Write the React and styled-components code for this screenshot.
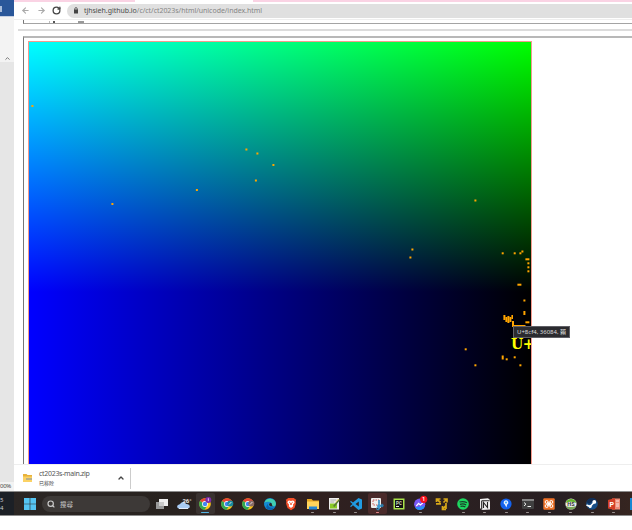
import React from "react";
import styled, { createGlobalStyle } from "styled-components";
import { ArrowLeft, ArrowRight, RotateCw, ChevronUp, Search } from "lucide-react";

const Global = createGlobalStyle`
  * { box-sizing: border-box; }
  html, body { margin: 0; background: #fff; overflow: hidden; }
  body { font-family: "Noto Sans", "Noto Sans CJK TC", sans-serif; }
  svg { display: block; flex: none; }
`;

const Screen = styled.div`
  width: 632px;
  height: 530px;
  display: flex;
  flex-direction: column;
  background: #fff;
  overflow: hidden;
`;
const Desktop = styled.div`
  height: 491px;
  display: flex;
  flex: none;
`;

/* Word window peeking out on the left */
const SideWindow = styled.div`
  width: 14px;
  flex: none;
  display: flex;
  flex-direction: column;
  background: #e6e6e6;
`;
const SideTitle = styled.div`
  height: 17px;
  background: #2a579a;
  padding-top: 6px;
  border-bottom: 1px solid #c6d0e2;
`;
const SideTitleMark = styled.div`
  width: 2px;
  height: 6px;
  background: #a9bddb;
`;
const SideRibbon = styled.div`
  height: 45px;
  background: #f3f3f3;
  display: flex;
  align-items: flex-end;
  padding: 0 0 0 4px;
  color: #666;
`;
const SideStatus = styled.div`
  height: 9px;
  margin-top: auto;
  background: #f3f3f3;
  font-size: 6px;
  line-height: 8px;
  letter-spacing: -0.3px;
  color: #444;
  white-space: nowrap;
`;

const Browser = styled.div`
  flex: 1;
  min-width: 0;
  display: flex;
  flex-direction: column;
`;
const TabStrip = styled.div`
  height: 2px;
  background: #fad3e4;
  padding-left: 121px;
`;
const ActiveTab = styled.div`
  width: 118px;
  height: 2px;
  background: #fff;
`;
const Toolbar = styled.div`
  height: 18px;
  display: flex;
  align-items: center;
  padding: 0 0 0 6px;
  color: #555;
  border-bottom: 1px solid #eee;
`;
const NavButton = styled.div`
  width: 10px;
  display: flex;
  justify-content: center;
  margin-right: ${(p) => p.$gap}px;
  color: ${(p) => (p.$muted ? "#aaa" : "#444")};
`;
const Omnibox = styled.div`
  flex: 1;
  height: 14px;
  background: #e0e0e0;
  border-radius: 7px 0 0 7px;
  display: flex;
  align-items: center;
  padding-left: 6px;
  gap: 5px;
`;
const Url = styled.span`
  font-size: 7px;
  line-height: 12px;
  letter-spacing: -0.04px;
  color: #858585;
  white-space: nowrap;
`;
const Host = styled.span`
  color: #4c4c4c;
`;

const Page = styled.div`
  height: 444px;
  overflow: hidden;
  display: flex;
  flex-direction: column;
`;
const UpperFrame = styled.div`
  height: 4px;
  flex: none;
  margin-left: 9px;
  border-left: 1px solid #777;
  border-bottom: 1px solid #a4a4a4;
  padding: 1px 0 0 25px;
  display: flex;
  gap: 3px;
`;
const TextTail = styled.div`
  width: ${(p) => p.$w}px;
  height: 2px;
  margin-left: ${(p) => p.$left}px;
  background: ${(p) => p.$c};
`;
const Rule = styled.div`
  height: 2px;
  flex: none;
  margin: 5px 0 5px 4px;
  background: #dcdcdc;
`;
const LowerFrame = styled.div`
  flex: 1;
  min-height: 0;
  margin-left: 9px;
  border-left: 1px solid #777;
  border-top: 2px solid #b8b8b8;
  padding: 3px 0 0 4px;
  display: flex;
`;
const Canvas = styled.div`
  position: relative;
  width: 504px;
  height: 504px;
  flex: none;
  border: 1px solid #f59a8d;
  background:
    linear-gradient(to right, #00f, #000),
    linear-gradient(to bottom, #0f0, #000 250px);
  background-blend-mode: screen;
`;
const Plot = styled.svg`
  position: absolute;
  left: 0;
  top: 0;
`;
const CodeLabel = styled.div`
  position: absolute;
  left: 482px;
  top: 294px;
  width: 20px;
  height: 17px;
  overflow: hidden;
  font: bold 14px/17px "DejaVu Serif", serif;
  letter-spacing: -0.5px;
  white-space: nowrap;
  color: #ff0;
`;
const Tooltip = styled.div`
  position: absolute;
  left: 484px;
  top: 284px;
  width: 57px;
  height: 12px;
  background: #2b2b2f;
  border: 1px solid #606066;
  color: #ddd;
  font-size: 6px;
  line-height: 10px;
  padding-left: 3px;
  letter-spacing: 0;
  white-space: nowrap;
`;

const DownloadBar = styled.div`
  height: 27px;
  border-top: 1px solid #eee;
  display: flex;
  align-items: center;
  padding-left: 9px;
  background: #fff;
`;
const DownloadItem = styled.div`
  width: 108px;
  height: 21px;
  border-right: 1px solid #ccc;
  display: flex;
  align-items: center;
  color: #444;
`;
const DownloadText = styled.div`
  width: 78px;
  margin-left: 7px;
  display: flex;
  flex-direction: column;
`;
const FileName = styled.span`
  font-size: 7px;
  line-height: 10px;
  letter-spacing: -0.3px;
  color: #555;
`;
const FileState = styled.span`
  font-size: 5px;
  line-height: 9px;
  color: #444;
`;

const Taskbar = styled.div`
  height: 25px;
  flex: none;
  display: flex;
  align-items: center;
  border-top: 1px solid #8c8c8c;
  border-bottom: 1px solid #8c8c8c;
  background: linear-gradient(to right, #1c2026 14px, #2b2624 14px, #28221f 170px, #30201f 290px, #2c2021 420px, #271f22 560px, #362520);
`;
const Clock = styled.div`
  width: 14px;
  font-size: 6px;
  line-height: 8px;
  color: #ccc;
  flex: none;
`;
const Start = styled.div`
  width: 28px;
  padding-left: 10px;
  flex: none;
`;
const SearchPill = styled.div`
  width: 108px;
  height: 16px;
  border-radius: 8px;
  background: #3d3937;
  display: flex;
  align-items: center;
  padding-left: 5px;
  gap: 5px;
  font-size: 6.5px;
  color: #ccc;
  flex: none;
`;
const Apps = styled.div`
  display: grid;
  grid-auto-flow: column;
  grid-auto-columns: 21.5px;
  height: 23px;
  margin-left: 1.5px;
`;
const AppButton = styled.div`
  position: relative;
  display: flex;
  align-items: center;
  justify-content: center;
  height: 21px;
  margin: 1px;
  border-radius: 2px;
  background: ${(p) => p.$bg || "transparent"};
`;
const Indicator = styled.div`
  position: absolute;
  left: calc(50% - ${(p) => p.$w / 2}px);
  bottom: 1px;
  width: ${(p) => p.$w}px;
  height: 1.5px;
  border-radius: 1px;
  background: ${(p) => p.$c};
`;

/* x, y, width, height inside the code point canvas */
const dots = [
  [2, 63], [82, 161], [166.5, 147], [216, 106.5], [227, 110.5], [243, 122], [225.5, 137.5],
  [445, 157.5], [382, 206.5], [380, 214.5], [472.3, 210.3], [484.3, 210.3], [490, 210.3],
  [492, 208.5], [496, 216.3, 4, 2], [498, 220.3], [498, 224.3], [498, 228.3],
  [488, 241.7, 4, 2], [494, 257.5], [494, 269, 2, 4], [496, 279.3, 4, 2], [435.3, 306.3],
  [445, 322.3], [472.3, 313.5, 2, 4], [476.3, 316.3], [484.3, 314.3], [490, 322.3],
  [474, 273, 2, 5], [476, 275, 2, 5], [478, 274, 2, 7], [480, 275, 2, 5], [482, 273, 1.6, 4],
  [482.6, 279, 2, 6], [482.6, 283, 13.5, 2],
];

const Chrome = ({ badge, letter }) => (
  <svg width="14" height="14" viewBox="0 0 14 14">
    <circle cx="7" cy="7" r="5.8" fill="#fbc418" />
    <path d="M7 7 2 4A5.8 5.8 0 0 1 12 4Z" fill="#ea4335" />
    <path d="M7 7 2 4A5.8 5.8 0 0 0 6.6 12.8L9 9Z" fill="#32a854" />
    <circle cx="7" cy="7" r="2.9" fill="#fff" />
    <circle cx="7" cy="7" r="2.2" fill="#4285f4" />
    <circle cx="10.3" cy={letter ? 3 : 6.4} r="3" fill={badge} />
    {letter && <rect x="9.8" y="1.2" width="1.1" height="3" fill="#d9b6ee" />}
    {!letter && <path d="M9 7.5 11.4 5" stroke="#ddd" strokeWidth="1" />}
  </svg>
);
const S = (p) => <svg width="14" height="14" viewBox="0 0 14 14" overflow="visible">{p.children}</svg>;
const Glyph = ({ x = 7, y, size, color, children, w = 700 }) => (
  <text x={x} y={y} fontSize={size} fill={color} fontWeight={w} textAnchor="middle" fontFamily="Roboto, sans-serif">{children}</text>
);

const apps = [
  { icon: <S><path d="M4 2h9v7H4z" fill="#eee" /><path d="M1 5h8v7H1z" fill="#999" /><path d="M4 5h5v4H4z" fill="#c9c9c9" /></S> },
  { icon: <S><path d="M1.500 11.500a2 2 0 0 1 0-3.800Q3 7.500 3.500 6.500A3 3 0 0 1 9 7q3.500-.2 3.800 2.500a2 2 0 0 1-2 2Z" fill="#a9ccf4" /><path d="M2 11.500h9" stroke="#e4efff" /><Glyph x={10} y={5.500} size={6} color="#eee">26°</Glyph></S> },
  { icon: <Chrome badge="#7c2aa8" letter />, bg: "#393230", ind: "active" },
  { icon: <Chrome badge="#178b9f" /> },
  { icon: <Chrome badge="#8a6b67" /> },
  { icon: <S><circle cx="7" cy="7" r="6" fill="#138bd2" /><path d="M1.300 6A6 6 0 0 1 13 7q-.3 2.300-2.600 2.200-1.700-.2-1.400-1Q9 5 5.500 4.700 3 4.400 1.300 6Z" fill="#43cfb0" /><path d="M5 6.500q-1 5 6.500 4Q9 14 5.200 12.600 1.500 11 5 6.500Z" fill="#0961ae" /><path d="M6 7q0 3 4.800 2.200Q8.600 9 9 7.800 8.800 6 7.500 5.800Z" fill="#2b2525" /></S> },
  { icon: <S><path d="M4 1h6l1 1.300 1.200.2-.5 2 .2 2.300L10.500 11 7 13.200 3.500 11 2.100 6.800l.2-2.300-.5-2L3 2.300Z" fill="#f4502a" /><path d="m4 4 1.300-.5L7 4l1.700-.5L10 4l.6 1.500L9 7.500l.2 1.800L7 11 4.800 9.300 5 7.500 3.400 5.500Z" fill="#fff" /><path d="m5 5 1.500 1V8M9 5 7.500 6V8" stroke="#f4502a" strokeWidth=".7" fill="none" /></S> },
  { icon: <S><path d="M1 2h4.500L7 3.500h6V12H1Z" fill="#e6a520" /><path d="M1 4.500h12V12H1Z" fill="#ffd45c" /><path d="M3 9.500h8V12.500H3Z" fill="#2586d4" /></S>, ind: "run" },
  { icon: <S><path d="M2 1h10v11.500H2Z" fill="#eee" /><path d="M3.300 3h6M3.300 5h4" stroke="#999" strokeWidth=".8" /><path d="M3 6.500h7v5H3Z" fill="#8ac926" /><path d="m6 9 6-7 1 1-5.500 7Z" fill="#597d36" /><path d="m8.500 5.500 3-3.500" stroke="#e7c55a" /></S>, ind: "run" },
  { icon: <S><path d="m9.500 1 3.500 1.500v9L9.500 13 4 8.300 2 10 1 9.200 3.500 7 1 4.800 2 4l2 1.600ZM9.800 4.500 6.500 7l3.300 2.500Z" fill="#209be2" fillRule="evenodd" /></S>, ind: "run" },
  { icon: <S><rect x="1" y="1" width="10" height="10" rx="1" fill="#eee" /><path d="M3 3h6v5H3Z" fill="none" stroke="#c95e59" strokeDasharray="1.500 1" /><path d="M9 3v9M7 9h6" stroke="#3296cf" strokeWidth="1.600" /><circle cx="8" cy="11.500" r="1.400" fill="none" stroke="#3296cf" /><circle cx="12" cy="8.500" r="1.300" fill="none" stroke="#287bad" /></S>, bg: "#4a2a2a", ind: "warn" },
  { icon: <S><rect x="1.500" y="1.500" width="11" height="11" fill="#a9e34a" /><rect x="3" y="3" width="8" height="8" fill="#111" /><Glyph y={7.500} size={4.500} color="#cfd8c0">PC</Glyph><path d="M4 9.500h3" stroke="#eee" /></S> },
  { icon: <S><circle cx="6.700" cy="7.200" r="5.600" fill="#7957f4" /><path d="M2 10.500A5.600 5.600 0 0 0 12 9Q7 9 2 10.500Z" fill="#278df5" /><path d="m3.300 9 2.300-2.600L7.300 8l2.500-2" stroke="#fff" fill="none" strokeWidth="1.200" /><circle cx="10.700" cy="2.300" r="3.600" fill="#f5101a" /><Glyph x={10.700} y={4.100} size={5} color="#fff">1</Glyph></S>, ind: "run" },
  { icon: <S><path d="M1.500 5V2h4M1.500 2l4 3.500M8.500 2H12v3.500M12 2 8.500 5.500M1 6.800h5M11 6v6M7.500 9v3.300H11M7.500 12 11 8.500" stroke="#d7a719" strokeWidth="1.700" fill="none" /></S> },
  { icon: <S><circle cx="7" cy="7" r="5.800" fill="#1ed760" /><path d="M3.500 5q4-1.200 7.500.8M4 7.300q3.400-1 6.200.6M4.500 9.400q2.600-.7 4.800.5" stroke="#193f28" strokeWidth="1.200" fill="none" /></S>, ind: "run" },
  { icon: <S><path d="m2 2 8-.700L12 3v9.500l-8 .500-2-2Z" fill="#eee" /><path d="M3.700 3.700h8M3.700 3.700V12.500M5.500 11V5.500l4 5V5" stroke="#222" strokeWidth="1.100" fill="none" /></S>, ind: "run" },
  { icon: <S><circle cx="7" cy="7" r="5.600" fill="#1462ee" /><path d="M7 3.200a2.300 2.300 0 0 1 1.200 4.300L7.400 10.500 5.800 7.500A2.300 2.300 0 0 1 7 3.200Z" fill="#e8f0ff" /><circle cx="7" cy="5.500" r="1" fill="#38aaff" /></S>, ind: "run" },
  { icon: <S><rect x="1" y="2" width="12" height="10" rx="1" fill="#404040" /><path d="M1 2h12v2H1Z" fill="#858585" /><path d="m3 5.500 2 1.700-2 1.700M6.500 9.500H10" stroke="#eee" fill="none" /></S>, ind: "run" },
  { icon: <S><rect x="1.300" y="1.300" width="11.400" height="11.400" rx="1" fill="#ef7228" /><path d="M5.300 5.300 8.700 8.700M8.700 5.300 5.300 8.700" stroke="#fff" strokeWidth="1.500" /><circle cx="4.700" cy="5" r="1.500" fill="none" stroke="#fff" /><circle cx="9.300" cy="5" r="1.500" fill="none" stroke="#fff" /><circle cx="4.700" cy="9" r="1.500" fill="none" stroke="#fff" /><circle cx="9.300" cy="9" r="1.500" fill="none" stroke="#fff" /></S>, ind: "run" },
  { icon: <S><circle cx="7" cy="7" r="5.600" fill="#eee" /><path d="M1.600 6A5.600 5.600 0 0 1 12.400 6Q7 3.500 1.600 6Z" fill="#65b52f" /><path d="M1.800 9A5.600 5.600 0 0 0 12.200 9Q7 11 1.800 9Z" fill="#79a65a" /><Glyph y={9} size={5.500} color="#333">HS</Glyph></S>, ind: "run" },
  { icon: <S><circle cx="7" cy="7" r="5.800" fill="#174d86" /><path d="M1.500 5A5.800 5.800 0 0 1 12.500 5L8 4 4 7Z" fill="#102d56" /><path d="m1.500 8 3.500 1.500L9 5.500" stroke="#fff" strokeWidth="1.600" fill="none" /><circle cx="9.300" cy="4.900" r="1.900" fill="#fff" /><circle cx="5.200" cy="9.400" r="1.500" fill="#fff" /></S>, ind: "run" },
  { icon: <S><path d="M5 1.500h8v11H5Z" fill="#ed8c77" /><path d="M1 3 8 1v12L1 11.500Z" fill="#d33f27" /><Glyph x={4.800} y={9.500} size={7} color="#fff">P</Glyph><path d="M9 4h3M9 7h3M9 9h3" stroke="#fff" strokeWidth=".8" /></S>, ind: "run" },
  { icon: <S><rect x="2" y="1" width="12" height="12" fill="#1688d3" /></S> },
];

const indicators = {
  active: { w: 8, c: "#54b5e5" },
  run: { w: 3, c: "#9a9291" },
  warn: { w: 3, c: "#e58588" },
};

export default function App() {
  return (
    <Screen>
      <Global />
      <Desktop>
        <SideWindow>
          <SideTitle><SideTitleMark /></SideTitle>
          <SideRibbon><ChevronUp size={7} strokeWidth={3} /></SideRibbon>
          <SideStatus>00%</SideStatus>
        </SideWindow>
        <Browser>
          <TabStrip><ActiveTab /></TabStrip>
          <Toolbar>
            <NavButton $gap={6} $muted><ArrowLeft size={9} strokeWidth={3} /></NavButton>
            <NavButton $gap={5} $muted><ArrowRight size={9} strokeWidth={3} /></NavButton>
            <NavButton $gap={6}><RotateCw size={9} strokeWidth={3.5} /></NavButton>
            <Omnibox>
              <svg width="6" height="7" viewBox="0 0 6 7">
                <rect x="1" y="2.500" width="4" height="4" fill="#444" />
                <path d="M1.800 3V1.800a1.200 1.200 0 0 1 2.400 0V3" fill="none" stroke="#444" strokeWidth=".8" />
              </svg>
              <Url><Host>tjhsieh.github.io</Host>/c/ct/ct2023s/html/unicode/index.html</Url>
            </Omnibox>
          </Toolbar>
          <Page>
            <UpperFrame>
              <TextTail $w={1} $left={0} $c="#bbb" />
              <TextTail $w={2} $left={0} $c="#555" />
              <TextTail $w={6} $left={20} $c="#999" />
            </UpperFrame>
            <Rule />
            <LowerFrame>
              <Canvas>
                <Plot width="502" height="502" fill="#ffa500">
                  {dots.map(([x, y, w = 2, h = 2], i) => (
                    <rect key={i} x={x + 0.4} y={y} width={w} height={h} />
                  ))}
                </Plot>
                <CodeLabel>U+</CodeLabel>
                <Tooltip>U+8cf4, 36084, 賴</Tooltip>
              </Canvas>
            </LowerFrame>
          </Page>
          <DownloadBar>
            <DownloadItem>
              <svg width="9" height="8" viewBox="0 0 9 8">
                <path d="M0 0h3.500l1 1H9v7H0Z" fill="#e8b23a" />
                <path d="M0 2.500h9V8H0Z" fill="#fbd265" />
                <path d="M3 5h6" stroke="#8f9a9e" strokeWidth="1.200" />
              </svg>
              <DownloadText>
                <FileName>ct2023s-main.zip</FileName>
                <FileState>已移除</FileState>
              </DownloadText>
              <ChevronUp size={8} strokeWidth={4} />
            </DownloadItem>
          </DownloadBar>
        </Browser>
      </Desktop>
      <Taskbar>
        <Clock>5<br />4</Clock>
        <Start>
          <svg width="12" height="12" viewBox="0 0 12 12">
            <path d="M0 0h5.700v5.700H0ZM6.300 0H12v5.700H6.300ZM0 6.300h5.700V12H0ZM6.300 6.300H12V12H6.300Z" fill="#55c5f3" />
          </svg>
        </Start>
        <SearchPill><Search size={8} strokeWidth={3.500} />搜尋</SearchPill>
        <Apps>
          {apps.map((a, i) => (
            <AppButton key={i} $bg={a.bg}>
              {a.icon}
              {a.ind && <Indicator $w={indicators[a.ind].w} $c={indicators[a.ind].c} />}
            </AppButton>
          ))}
        </Apps>
      </Taskbar>
    </Screen>
  );
}
